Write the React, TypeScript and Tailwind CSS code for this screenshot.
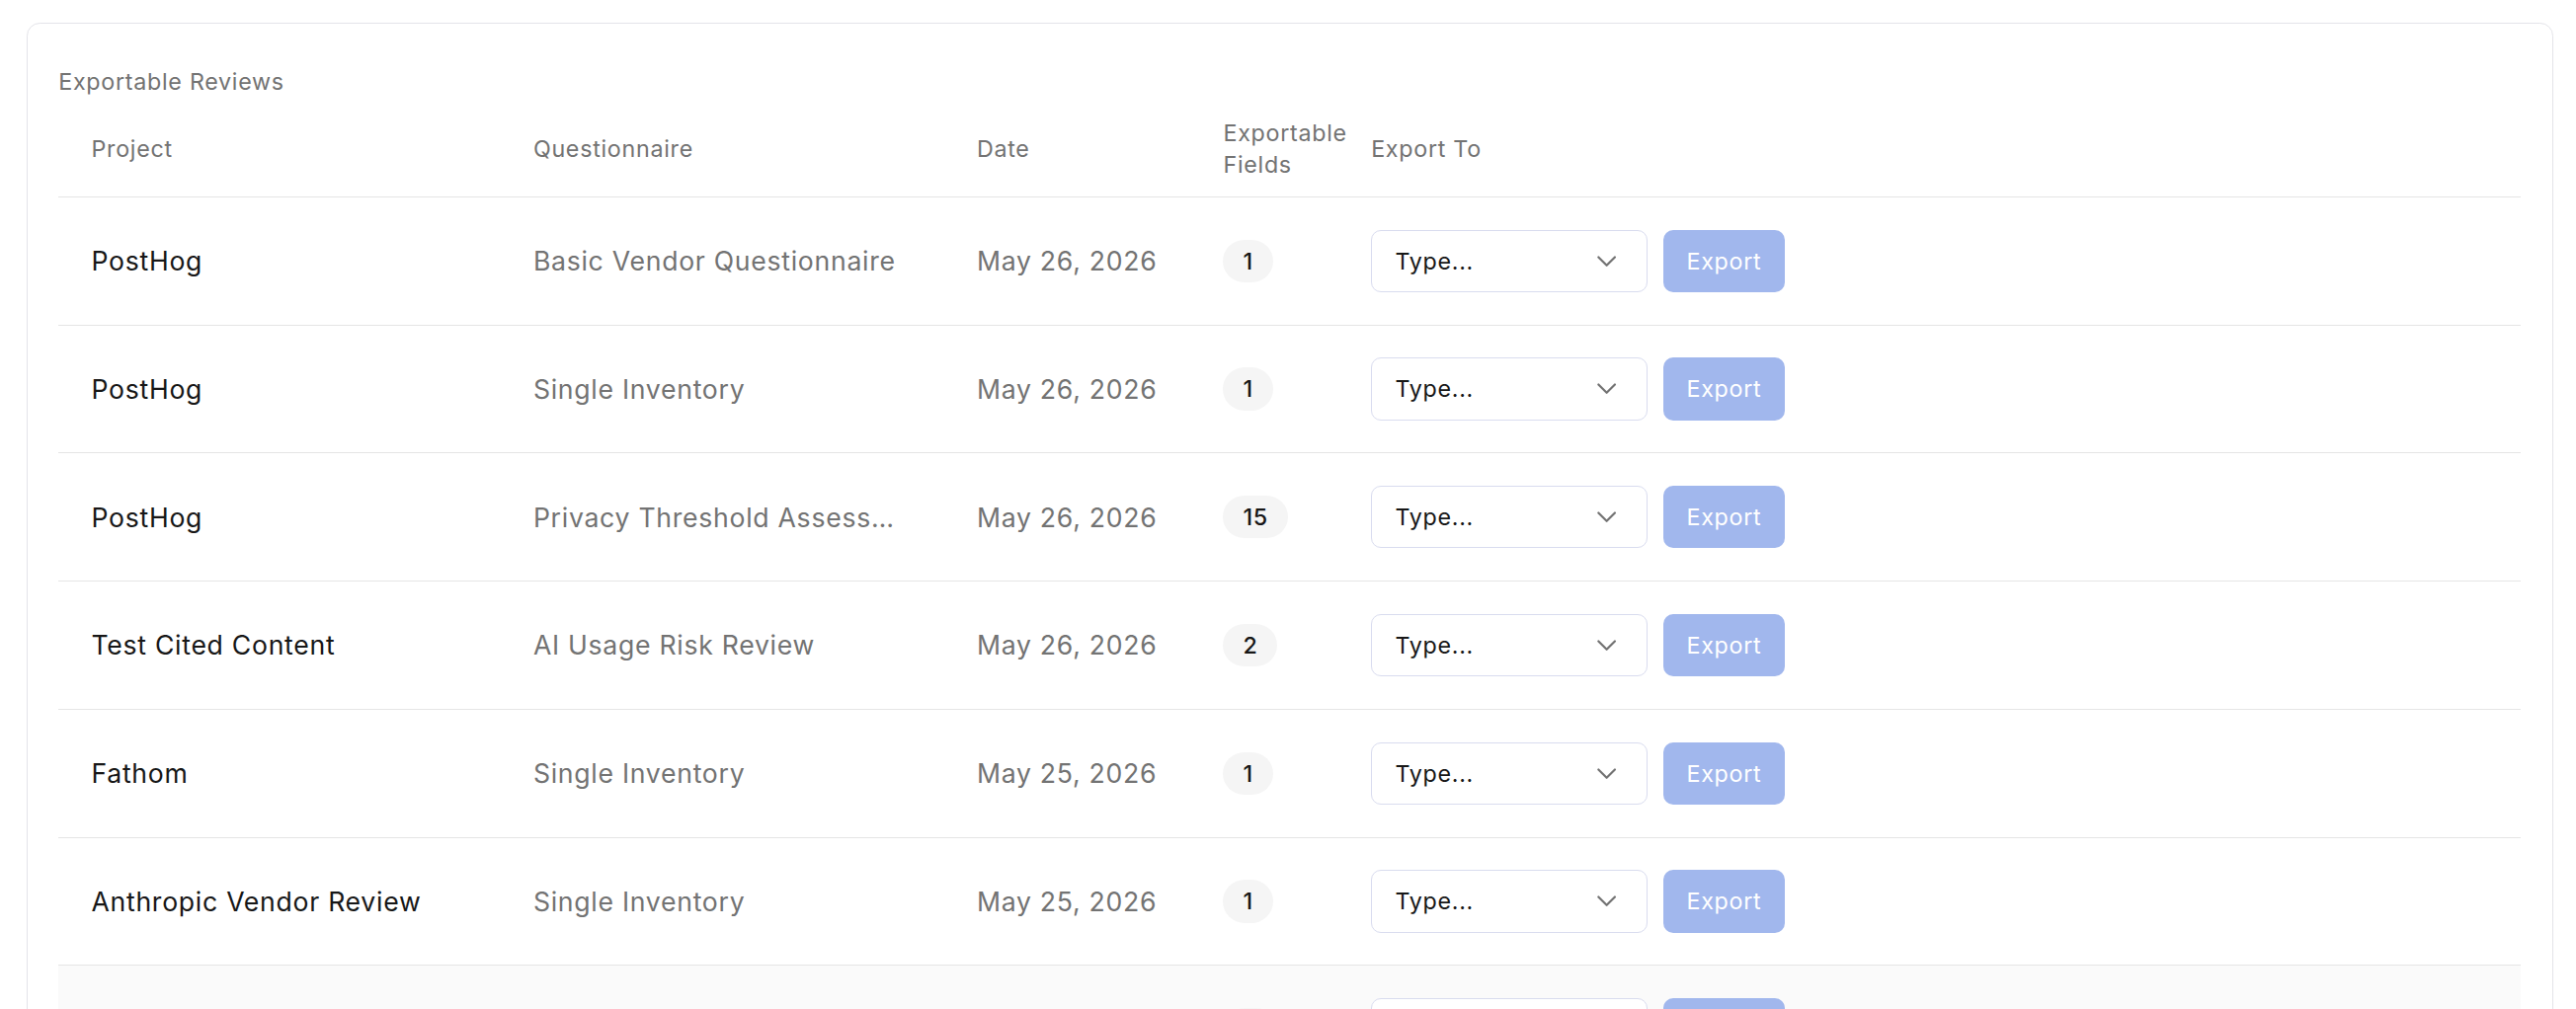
import React from "react";
import { ChevronDown } from "lucide-react";

type Review = {
  project: string;
  questionnaire: string;
  date: string;
  fields: number;
};

const reviews: Review[] = [
  { project: "PostHog", questionnaire: "Basic Vendor Questionnaire", date: "May 26, 2026", fields: 1 },
  { project: "PostHog", questionnaire: "Single Inventory", date: "May 26, 2026", fields: 1 },
  { project: "PostHog", questionnaire: "Privacy Threshold Assessment", date: "May 26, 2026", fields: 15 },
  { project: "Test Cited Content", questionnaire: "AI Usage Risk Review", date: "May 26, 2026", fields: 2 },
  { project: "Fathom", questionnaire: "Single Inventory", date: "May 25, 2026", fields: 1 },
  { project: "Anthropic Vendor Review", questionnaire: "Single Inventory", date: "May 25, 2026", fields: 1 },
  { project: "Linear", questionnaire: "Basic Vendor Questionnaire", date: "May 24, 2026", fields: 3 },
  { project: "Notion", questionnaire: "Single Inventory", date: "May 22, 2026", fields: 1 },
];

// shared column template so header + rows line up
const cols = "grid grid-cols-[289px_270px_150px_90px_1fr]";

const ExportRow: React.FC<{ review: Review; hovered?: boolean }> = ({ review, hovered }) => {
  return (
    <div
      className={`${cols} items-center h-[78px] border-b border-neutral-200 text-base ${
        hovered ? "bg-neutral-50" : ""
      }`}
    >
      <div className="pl-5 pt-px text-neutral-900">{review.project}</div>
      <div className="pt-px text-neutral-500 max-w-[223px] truncate">{review.questionnaire}</div>
      <div className="pt-px text-neutral-500">{review.date}</div>
      <div>
        <span className="inline-block rounded-full bg-neutral-100 px-3 py-[3px] text-sm leading-5 font-medium text-neutral-900">
          {review.fields}
        </span>
      </div>
      <div className="flex items-center gap-2.5">
        <button className="flex items-center justify-between w-[168px] h-[38px] pl-3.5 pr-3.5 bg-white border border-[#d9dcef] rounded-md text-sm text-neutral-900">
          <span>Type...</span>
          <ChevronDown size={20} strokeWidth={1.6} className="text-neutral-500" />
        </button>
        <button
          disabled
          className="h-[38px] px-[14px] rounded-md bg-[#a1b7ed] text-sm text-white"
        >
          Export
        </button>
      </div>
    </div>
  );
};

export default function App() {
  return (
    <div className="[zoom:1.6633] [font-family:Inter,sans-serif] tracking-[0.027em] bg-white pl-4 pr-3.5 pt-3.5">
      <div className="border border-[#e4e4e9] rounded-lg px-[19px] pt-[25px]">
        <div className="text-sm leading-5 text-neutral-500">Exportable Reviews</div>

        {/* header */}
        <div className={`${cols} items-center pt-3 pb-2.5 border-b border-neutral-200 text-sm leading-[19px] text-neutral-500`}>
          <div className="pl-5">Project</div>
          <div>Questionnaire</div>
          <div>Date</div>
          <div>
            Exportable
            <br />
            Fields
          </div>
          <div>Export To</div>
        </div>

        {reviews.map((r, i) => (
          <ExportRow key={i} review={r} hovered={i === 6} />
        ))}
      </div>
    </div>
  );
}
